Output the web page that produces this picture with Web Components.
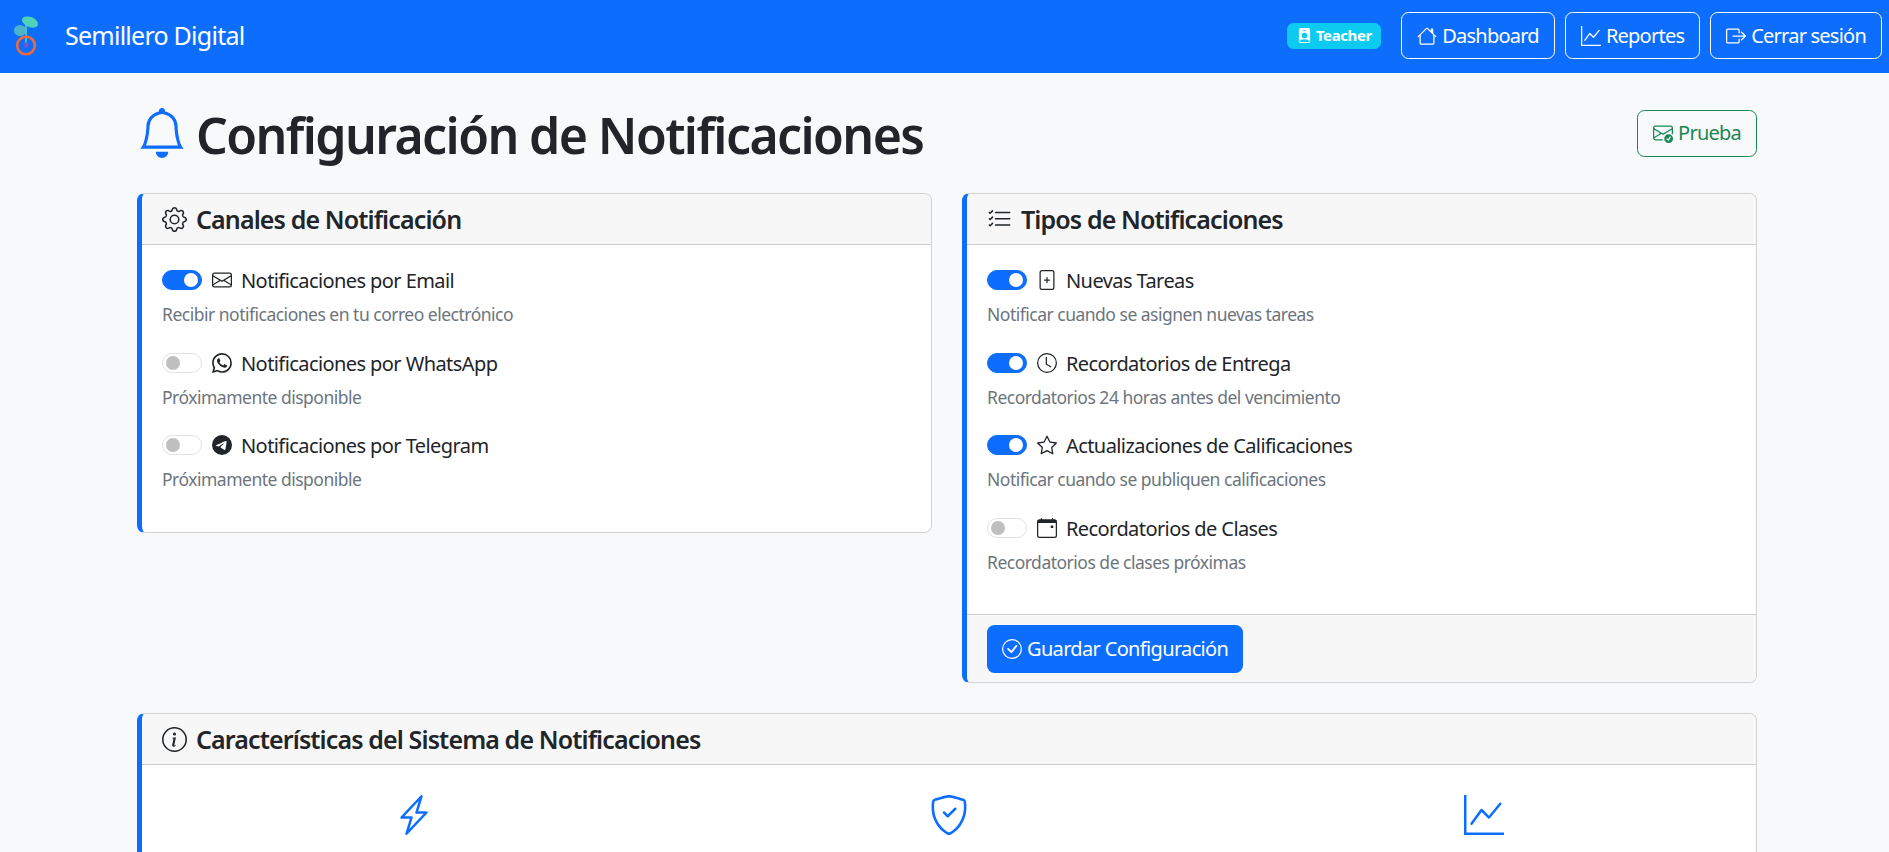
<!DOCTYPE html>
<html lang="es">
<head>
<meta charset="utf-8">
<title>Configuración de Notificaciones</title>
<style>
    html, body { margin: 0; height: 100%; overflow: hidden; }
    body {
        background: #f8f9fa;
        color: #212529;
        font-family: "Noto Sans", "Open Sans", sans-serif;
        font-size: 20px;
        line-height: 1.5;
        letter-spacing: -0.58px;
    }
</style>
</head>
<body>
<app-navbar></app-navbar>
<notif-page></notif-page>

<script>
const ICONS = {
    house: '<path d="M8.707 1.5a1 1 0 0 0-1.414 0L.646 8.146a.5.5 0 0 0 .708.708L2 8.207V13.5A1.5 1.5 0 0 0 3.5 15h9a1.5 1.5 0 0 0 1.5-1.5V8.207l.646.647a.5.5 0 0 0 .708-.708L13 5.793V2.5a.5.5 0 0 0-.5-.5h-1a.5.5 0 0 0-.5.5v1.293zM13 7.207V13.5a.5.5 0 0 1-.5.5h-9a.5.5 0 0 1-.5-.5V7.207l5-5z"/>',
    graph: '<path d="M0 0h1v15h15v1H0zm14.817 3.113a.5.5 0 0 1 .07.704l-4.5 5.5a.5.5 0 0 1-.74.037L7.06 6.767l-3.656 5.027a.5.5 0 0 1-.808-.588l4-5.5a.5.5 0 0 1 .758-.06l2.609 2.61 4.15-5.073a.5.5 0 0 1 .704-.07"/>',
    logout: '<path d="M10 12.5a.5.5 0 0 1-.5.5h-8a.5.5 0 0 1-.5-.5v-9a.5.5 0 0 1 .5-.5h8a.5.5 0 0 1 .5.5v2a.5.5 0 0 0 1 0v-2A1.5 1.5 0 0 0 9.5 2h-8A1.5 1.5 0 0 0 0 3.5v9A1.5 1.5 0 0 0 1.5 14h8a1.5 1.5 0 0 0 1.5-1.5v-2a.5.5 0 0 0-1 0z"/><path d="M15.854 8.354a.5.5 0 0 0 0-.708l-3-3a.5.5 0 0 0-.708.708L14.293 7.5H5.5a.5.5 0 0 0 0 1h8.793l-2.147 2.146a.5.5 0 0 0 .708.708z"/>',
    badge: '<path d="M2 2a2 2 0 0 1 2-2h8a2 2 0 0 1 2 2v12a2 2 0 0 1-2 2H4a2 2 0 0 1-2-2zm4.5 0a.5.5 0 0 0 0 1h3a.5.5 0 0 0 0-1zM8 11a3 3 0 1 0 0-6 3 3 0 0 0 0 6m5 2.755C12.146 12.825 10.623 12 8 12s-4.146.826-5 1.755V14a1 1 0 0 0 1 1h8a1 1 0 0 0 1-1z"/>',
    bell: '<path d="M8 16a2 2 0 0 0 2-2H6a2 2 0 0 0 2 2M8 1.918l-.797.161A4 4 0 0 0 4 6c0 .628-.134 2.197-.459 3.742-.16.767-.376 1.566-.663 2.258h10.244c-.287-.692-.502-1.49-.663-2.258C12.134 8.197 12 6.628 12 6a4 4 0 0 0-3.203-3.92zM14.22 12c.223.447.481.801.78 1H1c.299-.199.557-.553.78-1C2.68 10.2 3 6.88 3 6c0-2.42 1.72-4.44 4.005-4.901a1 1 0 1 1 1.99 0A5 5 0 0 1 13 6c0 .88.32 4.2 1.22 6"/>',
    envcheck: '<path d="M2 2a2 2 0 0 0-2 2v8.01A2 2 0 0 0 2 14h5.5a.5.5 0 0 0 0-1H2a1 1 0 0 1-.966-.741l5.64-3.471L8 9.583l7-4.2V8.5a.5.5 0 0 0 1 0V4a2 2 0 0 0-2-2zm3.708 6.208L1 11.105V5.383zM1 4.217V4a1 1 0 0 1 1-1h12a1 1 0 0 1 1 1v.217l-7 4.2z"/><path d="M16 12.5a3.5 3.5 0 1 1-7 0 3.5 3.5 0 0 1 7 0m-1.993-1.679a.5.5 0 0 0-.686.172l-1.17 1.95-.547-.547a.5.5 0 0 0-.708.708l.774.773a.75.75 0 0 0 1.174-.144l1.335-2.226a.5.5 0 0 0-.172-.686"/>',
    gear: '<path d="M8 4.754a3.246 3.246 0 1 0 0 6.492 3.246 3.246 0 0 0 0-6.492M5.754 8a2.246 2.246 0 1 1 4.492 0 2.246 2.246 0 0 1-4.492 0"/><path d="M9.796 1.343c-.527-1.79-3.065-1.79-3.592 0l-.094.319a.873.873 0 0 1-1.255.52l-.292-.16c-1.64-.892-3.433.902-2.54 2.541l.159.292a.873.873 0 0 1-.52 1.255l-.319.094c-1.79.527-1.79 3.065 0 3.592l.319.094a.873.873 0 0 1 .52 1.255l-.16.292c-.892 1.64.901 3.434 2.541 2.54l.292-.159a.873.873 0 0 1 1.255.52l.094.319c.527 1.79 3.065 1.79 3.592 0l.094-.319a.873.873 0 0 1 1.255-.52l.292.16c1.64.893 3.434-.902 2.54-2.541l-.159-.292a.873.873 0 0 1 .52-1.255l.319-.094c1.79-.527 1.79-3.065 0-3.592l-.319-.094a.873.873 0 0 1-.52-1.255l.16-.292c.893-1.64-.902-3.433-2.541-2.54l-.292.159a.873.873 0 0 1-1.255-.52zm-2.633.283c.246-.835 1.428-.835 1.674 0l.094.319a1.873 1.873 0 0 0 2.693 1.115l.291-.16c.764-.415 1.6.42 1.184 1.185l-.159.292a1.873 1.873 0 0 0 1.116 2.692l.318.094c.835.246.835 1.428 0 1.674l-.319.094a1.873 1.873 0 0 0-1.115 2.693l.16.291c.415.764-.42 1.6-1.185 1.184l-.291-.159a1.873 1.873 0 0 0-2.693 1.116l-.094.318c-.246.835-1.428.835-1.674 0l-.094-.319a1.873 1.873 0 0 0-2.692-1.115l-.292.16c-.764.415-1.6-.42-1.184-1.185l.159-.291A1.873 1.873 0 0 0 1.945 8.93l-.319-.094c-.835-.246-.835-1.428 0-1.674l.319-.094A1.873 1.873 0 0 0 3.06 4.377l-.16-.292c-.415-.764.42-1.6 1.185-1.184l.292.159a1.873 1.873 0 0 0 2.692-1.115z"/>',
    listcheck: '<path fill-rule="evenodd" d="M5 11.5a.5.5 0 0 1 .5-.5h9a.5.5 0 0 1 0 1h-9a.5.5 0 0 1-.5-.5m0-4a.5.5 0 0 1 .5-.5h9a.5.5 0 0 1 0 1h-9a.5.5 0 0 1-.5-.5m0-4a.5.5 0 0 1 .5-.5h9a.5.5 0 0 1 0 1h-9a.5.5 0 0 1-.5-.5M3.854 2.146a.5.5 0 0 1 0 .708l-1.5 1.5a.5.5 0 0 1-.708 0l-.5-.5a.5.5 0 1 1 .708-.708L2 3.293l1.146-1.147a.5.5 0 0 1 .708 0m0 4a.5.5 0 0 1 0 .708l-1.5 1.5a.5.5 0 0 1-.708 0l-.5-.5a.5.5 0 1 1 .708-.708L2 7.293l1.146-1.147a.5.5 0 0 1 .708 0m0 4a.5.5 0 0 1 0 .708l-1.5 1.5a.5.5 0 0 1-.708 0l-.5-.5a.5.5 0 0 1 .708-.708l.146.147 1.146-1.147a.5.5 0 0 1 .708 0"/>',
    envelope: '<path d="M0 4a2 2 0 0 1 2-2h12a2 2 0 0 1 2 2v8a2 2 0 0 1-2 2H2a2 2 0 0 1-2-2zm2-1a1 1 0 0 0-1 1v.217l7 4.2 7-4.2V4a1 1 0 0 0-1-1zm13 2.383-4.708 2.825L15 11.105zm-.034 6.876-5.64-3.471L8 9.583l-1.326-.795-5.64 3.47A1 1 0 0 0 2 13h12a1 1 0 0 0 .966-.741M1 11.105l4.708-2.897L1 5.383z"/>',
    whatsapp: '<path d="M13.601 2.326A7.85 7.85 0 0 0 7.994 0C3.627 0 .068 3.558.064 7.926c0 1.399.366 2.76 1.057 3.965L0 16l4.204-1.102a7.9 7.9 0 0 0 3.79.965h.004c4.368 0 7.926-3.558 7.93-7.93A7.9 7.9 0 0 0 13.6 2.326zM7.994 14.521a6.6 6.6 0 0 1-3.356-.92l-.24-.144-2.494.654.666-2.433-.156-.251a6.56 6.56 0 0 1-1.007-3.505c0-3.626 2.957-6.584 6.591-6.584a6.56 6.56 0 0 1 4.66 1.931 6.56 6.56 0 0 1 1.928 4.66c-.004 3.639-2.961 6.592-6.592 6.592m3.615-4.934c-.197-.099-1.17-.578-1.353-.646-.182-.065-.315-.099-.445.099-.133.197-.513.646-.627.775-.114.133-.232.148-.43.05-.197-.1-.836-.308-1.592-.985-.59-.525-.985-1.175-1.103-1.372-.114-.198-.011-.304.088-.403.087-.088.197-.232.296-.346.1-.114.133-.198.198-.33.065-.134.034-.248-.015-.347-.05-.099-.445-1.076-.612-1.47-.16-.389-.323-.335-.445-.34-.114-.007-.247-.007-.38-.007a.73.73 0 0 0-.529.247c-.182.198-.691.677-.691 1.654s.71 1.916.81 2.049c.098.133 1.394 2.132 3.383 2.992.47.205.84.326 1.129.418.475.152.904.129 1.246.08.38-.058 1.171-.48 1.338-.943.164-.464.164-.86.114-.943-.049-.084-.182-.133-.38-.232"/>',
    telegram: '<path d="M16 8A8 8 0 1 1 0 8a8 8 0 0 1 16 0M8.287 5.906q-1.168.486-4.666 2.01-.567.225-.595.442c-.03.243.275.339.69.47l.175.055c.408.133.958.288 1.243.294q.39.01.868-.32 3.269-2.206 3.374-2.23c.05-.012.12-.026.166.016s.042.12.037.141c-.03.129-1.227 1.241-1.846 1.817-.193.18-.33.307-.358.336a8 8 0 0 1-.188.186c-.38.366-.664.64.015 1.088.327.216.589.393.85.571.284.194.568.387.936.629q.14.092.27.187c.331.236.63.448.997.414.214-.02.435-.22.547-.82.265-1.417.786-4.486.906-5.751a1.4 1.4 0 0 0-.013-.315.34.34 0 0 0-.114-.217.4.4 0 0 0-.24-.073c-.298.005-.96.16-3.6 1.263"/>',
    fileplus: '<path d="M8.5 6a.5.5 0 0 0-1 0v1.5H6a.5.5 0 0 0 0 1h1.5V10a.5.5 0 0 0 1 0V8.5H10a.5.5 0 0 0 0-1H8.5z"/><path d="M2 2a2 2 0 0 1 2-2h8a2 2 0 0 1 2 2v12a2 2 0 0 1-2 2H4a2 2 0 0 1-2-2zm10-1H4a1 1 0 0 0-1 1v12a1 1 0 0 0 1 1h8a1 1 0 0 0 1-1V2a1 1 0 0 0-1-1"/>',
    clock: '<path d="M8 3.5a.5.5 0 0 0-1 0V9a.5.5 0 0 0 .252.434l3.5 2a.5.5 0 0 0 .496-.868L8 8.71z"/><path d="M8 16A8 8 0 1 0 8 0a8 8 0 0 0 0 16m7-8A7 7 0 1 1 1 8a7 7 0 0 1 14 0"/>',
    star: '<path d="M2.866 14.85c-.078.444.36.791.746.593l4.39-2.256 4.389 2.256c.386.198.824-.149.746-.592l-.83-4.73 3.522-3.356c.33-.314.16-.888-.282-.95l-4.898-.696L8.465.792a.513.513 0 0 0-.927 0L5.354 5.12l-4.898.696c-.441.062-.612.636-.283.95l3.523 3.356-.83 4.73zm4.905-2.767-3.686 1.894.694-3.957a.56.56 0 0 0-.163-.505L1.71 6.745l4.052-.576a.53.53 0 0 0 .393-.288L8 2.223l1.847 3.658a.53.53 0 0 0 .393.288l4.052.575-2.906 2.77a.56.56 0 0 0-.163.506l.694 3.957-3.686-1.894a.5.5 0 0 0-.461 0z"/>',
    calendar: '<path d="M11 6.5a.5.5 0 0 1 .5-.5h1a.5.5 0 0 1 .5.5v1a.5.5 0 0 1-.5.5h-1a.5.5 0 0 1-.5-.5z"/><path d="M3.5 0a.5.5 0 0 1 .5.5V1h8V.5a.5.5 0 0 1 1 0V1h1a2 2 0 0 1 2 2v11a2 2 0 0 1-2 2H2a2 2 0 0 1-2-2V3a2 2 0 0 1 2-2h1V.5a.5.5 0 0 1 .5-.5M1 4v10a1 1 0 0 0 1 1h12a1 1 0 0 0 1-1V4z"/>',
    checkcircle: '<path d="M8 15A7 7 0 1 1 8 1a7 7 0 0 1 0 14m0 1A8 8 0 1 0 8 0a8 8 0 0 0 0 16"/><path d="m10.97 4.97-.02.022-3.473 4.425-2.093-2.094a.75.75 0 0 0-1.06 1.06L6.97 11.03a.75.75 0 0 0 1.079-.02l3.992-4.99a.75.75 0 0 0-1.071-1.05"/>',
    info: '<path d="M8 15A7 7 0 1 1 8 1a7 7 0 0 1 0 14m0 1A8 8 0 1 0 8 0a8 8 0 0 0 0 16"/><path d="m8.93 6.588-2.29.287-.082.38.45.083c.294.07.352.176.288.469l-.738 3.468c-.194.897.105 1.319.808 1.319.545 0 1.178-.252 1.465-.598l.088-.416c-.2.176-.492.246-.686.246-.275 0-.375-.193-.304-.533zM9 4.5a1 1 0 1 1-2 0 1 1 0 0 1 2 0"/>',
    lightning: '<path d="M11.251.068a.5.5 0 0 1 .227.58L9.677 6.5H13a.5.5 0 0 1 .364.843l-8 8.5a.5.5 0 0 1-.842-.49L6.323 9.5H3a.5.5 0 0 1-.364-.843l8-8.5a.5.5 0 0 1 .615-.09zM4.157 8.5H7a.5.5 0 0 1 .478.647L6.11 13.59l5.732-6.09H9a.5.5 0 0 1-.478-.647L9.89 2.41z"/>',
    shield: '<path d="M5.338 1.59a61 61 0 0 0-2.837.856.48.48 0 0 0-.328.39c-.554 4.157.726 7.19 2.253 9.188a10.7 10.7 0 0 0 2.287 2.233c.346.244.652.42.893.533q.18.085.293.118a1 1 0 0 0 .101.025 1 1 0 0 0 .1-.025q.114-.034.294-.118c.24-.113.547-.29.893-.533a10.7 10.7 0 0 0 2.287-2.233c1.527-1.997 2.807-5.031 2.253-9.188a.48.48 0 0 0-.328-.39c-.651-.213-1.75-.56-2.837-.855C9.552 1.29 8.531 1.067 8 1.067c-.53 0-1.552.223-2.662.524zM5.072.56C6.157.265 7.31 0 8 0s1.843.265 2.928.56c1.11.3 2.229.655 2.887.87a1.54 1.54 0 0 1 1.044 1.262c.596 4.477-.787 7.795-2.465 9.99a11.8 11.8 0 0 1-2.517 2.453 7 7 0 0 1-1.048.625c-.28.132-.581.24-.829.24s-.548-.108-.829-.24a7 7 0 0 1-1.048-.625 11.8 11.8 0 0 1-2.517-2.453C1.928 10.487.545 7.169 1.141 2.692A1.54 1.54 0 0 1 2.185 1.43 63 63 0 0 1 5.072.56"/><path d="M10.854 5.146a.5.5 0 0 1 0 .708l-3 3a.5.5 0 0 1-.708 0l-1.5-1.5a.5.5 0 1 1 .708-.708L7.5 7.793l2.646-2.647a.5.5 0 0 1 .708 0"/>'
};

class BiIcon extends HTMLElement
{
    constructor(){
        super();
        this.attachShadow({mode:"open"});
    }

    connectedCallback(){
        const size = this.getAttribute("size") || "1em";
        this.shadowRoot.innerHTML = `
        <style>
            :host { display: inline-flex; flex: none; width: ${size}; height: ${size}; }
            svg { display: block; width: 100%; height: 100%; fill: currentColor; }
        </style>
        <svg viewBox="0 0 16 16">${ICONS[this.getAttribute("name")] || ""}</svg>
        `;
    }
}

class NavButton extends HTMLElement
{
    constructor(){
        super();
        this.attachShadow({mode:"open"});
    }

    connectedCallback(){
        this.shadowRoot.innerHTML = `
        <style>
            :host {
                display: inline-flex;
                align-items: center;
                gap: 5px;
                box-sizing: border-box;
                height: 47px;
                padding: 0 15px;
                border: 1px solid currentColor;
                border-radius: 7.5px;
                color: var(--btn-color, #fff);
                letter-spacing: -0.77px;
                white-space: nowrap;
            }
        </style>
        <bi-icon name="${this.getAttribute("icon")}"></bi-icon><slot></slot>
        `;
    }
}

class AppNavbar extends HTMLElement
{
    constructor(){
        super();
        this.attachShadow({mode:"open"});
    }

    connectedCallback(){
        this.shadowRoot.innerHTML = `
        <style>
            :host {
                display: flex;
                align-items: center;
                box-sizing: border-box;
                height: 73px;
                padding: 0 7px 2px 12px;
                background: #0d6efd;
                color: #fff;
            }
            .brand { display: flex; align-items: center; gap: 23px; font-size: 25px; letter-spacing: -0.75px; flex: 1; }
            .logo { display: block; width: 30px; height: 44px; }
            .badge {
                display: inline-flex;
                align-items: center;
                gap: 4px;
                box-sizing: border-box;
                height: 26px;
                margin-right: 20px;
                padding: 0 9.5px;
                border-radius: 6.5px;
                background: #0dcaf0;
                font-size: 15px;
                font-weight: 700;
                letter-spacing: -0.4px;
            }
            .actions { display: flex; align-items: center; gap: 10px; }
        </style>
        <div class="brand">
            <svg class="logo" viewBox="0 0 30 44">
                <ellipse cx="8" cy="16.5" rx="6" ry="5.6" fill="#4cb3cb"/>
                <ellipse cx="18" cy="8" rx="8.4" ry="5" transform="rotate(22 18 8)" fill="#50d2b8"/>
                <path d="M14 9V30" stroke="#58d3b4" stroke-width="1.6" fill="none"/>
                <circle cx="14" cy="31.5" r="8.8" fill="none" stroke="#f0683a" stroke-width="2.6"/>
                <circle cx="14" cy="31" r="2.8" fill="#6a58d8"/>
            </svg>
            <span>Semillero Digital</span>
        </div>
        <span class="badge"><bi-icon name="badge"></bi-icon>Teacher</span>
        <div class="actions">
            <nav-button icon="house">Dashboard</nav-button>
            <nav-button icon="graph">Reportes</nav-button>
            <nav-button icon="logout">Cerrar sesión</nav-button>
        </div>
        `;
    }
}

class NotifToggle extends HTMLElement
{
    constructor(){
        super();
        this.attachShadow({mode:"open"});
    }

    connectedCallback(){
        this.shadowRoot.innerHTML = `
        <style>
            :host {
                display: inline-flex;
                align-items: center;
                flex: none;
                box-sizing: border-box;
                width: 40px;
                height: 20px;
                padding: 0 3px;
                border-radius: 10px;
                border: 1px solid #dee2e6;
                background: #fff;
            }
            :host([on]) {
                justify-content: flex-end;
                background: #0d6efd;
                border-color: #0d6efd;
            }
            .knob { width: 14px; height: 14px; border-radius: 50%; background: #bfbfbf; }
            :host([on]) .knob { background: #fff; }
        </style>
        <span class="knob"></span>
        `;
    }
}

class NotifItem extends HTMLElement
{
    constructor(){
        super();
        this.attachShadow({mode:"open"});
    }

    connectedCallback(){
        const on = this.hasAttribute("on") ? "on" : "";
        this.shadowRoot.innerHTML = `
        <style>
            :host { display: block; height: 62.5px; margin-bottom: 20px; }
            .row { display: flex; align-items: center; height: 30px; }
            bi-icon { margin-left: 10px; margin-right: 9px; }
            .label { padding-top: 2px; }
            .desc { margin-top: 6px; font-size: 17.5px; line-height: 26.25px; color: #6c757d; letter-spacing: -0.5px; }
        </style>
        <div class="row">
            <notif-toggle ${on}></notif-toggle>
            <bi-icon name="${this.getAttribute("icon")}"></bi-icon>
            <span class="label">${this.getAttribute("label")}</span>
        </div>
        <div class="desc"><slot></slot></div>
        `;
    }
}

class NotifCard extends HTMLElement
{
    constructor(){
        super();
        this.attachShadow({mode:"open"});
    }

    connectedCallback(){
        this.shadowRoot.innerHTML = `
        <style>
            :host {
                display: block;
                box-sizing: border-box;
                border: 1px solid rgba(0,0,0,.175);
                border-left: 5px solid #0d6efd;
                border-radius: 7.5px;
                background: #fff;
                overflow: hidden;
            }
            header {
                display: flex;
                align-items: center;
                gap: 9px;
                height: 51px;
                box-sizing: border-box;
                padding: 0 20px;
                border-bottom: 1px solid rgba(0,0,0,.175);
                background: #f7f7f7;
                font-size: 25px;
                font-weight: 600;
                letter-spacing: -0.88px;
            }
            header span { padding-top: 2px; }
            .body { padding: 20px 20px 19px; }
            .foot { display: none; height: 68px; box-sizing: border-box; padding: 10px 20px; border-top: 1px solid rgba(0,0,0,.175); background: #f7f7f7; }
            :host([footer]) .foot { display: block; }
        </style>
        <header><bi-icon name="${this.getAttribute("icon")}"></bi-icon><span>${this.getAttribute("title")}</span></header>
        <div class="body"><slot></slot></div>
        <div class="foot"><slot name="footer"></slot></div>
        `;
    }
}

class FeatureIcons extends HTMLElement
{
    constructor(){
        super();
        this.attachShadow({mode:"open"});
    }

    connectedCallback(){
        this.shadowRoot.innerHTML = `
        <style>
            :host {
                display: grid;
                grid-template-columns: repeat(3, 1fr);
                margin: 0 -16px;
                padding: 10px 0 60px;
                color: #0d6efd;
                justify-items: center;
            }
        </style>
        <bi-icon name="lightning" size="40px"></bi-icon>
        <bi-icon name="shield" size="40px"></bi-icon>
        <bi-icon name="graph" size="40px"></bi-icon>
        `;
    }
}

class NotifPage extends HTMLElement
{
    constructor(){
        super();
        this.attachShadow({mode:"open"});
    }

    connectedCallback(){
        this.shadowRoot.innerHTML = `
        <style>
            :host { display: block; padding: 30px 132px 0 137px; }
            .title-row { display: flex; align-items: center; justify-content: space-between; height: 60px; margin-bottom: 30px; }
            h1 {
                display: flex;
                align-items: center;
                gap: 9px;
                margin: 0;
                font-size: 50px;
                line-height: 60px;
                font-weight: 600;
                letter-spacing: -1.6px;
            }
            h1 bi-icon { color: #0d6efd; }
            h1 span { padding-top: 3px; }
            .test { --btn-color: #198754; }
            .columns { display: grid; grid-template-columns: 1fr 1fr; gap: 30px; align-items: start; margin-bottom: 30px; }
            .save {
                display: inline-flex;
                align-items: center;
                gap: 5px;
                box-sizing: border-box;
                height: 47.5px;
                padding: 0 15px;
                border-radius: 7.5px;
                background: #0d6efd;
                color: #fff;
                letter-spacing: -0.66px;
                vertical-align: top;
            }
        </style>
        <div class="title-row">
            <h1><bi-icon name="bell"></bi-icon><span>Configuración de Notificaciones</span></h1>
            <nav-button class="test" icon="envcheck">Prueba</nav-button>
        </div>
        <div class="columns">
            <notif-card icon="gear" title="Canales de Notificación">
                <notif-item on icon="envelope" label="Notificaciones por Email">Recibir notificaciones en tu correo electrónico</notif-item>
                <notif-item icon="whatsapp" label="Notificaciones por WhatsApp">Próximamente disponible</notif-item>
                <notif-item icon="telegram" label="Notificaciones por Telegram">Próximamente disponible</notif-item>
            </notif-card>
            <notif-card icon="listcheck" title="Tipos de Notificaciones" footer>
                <notif-item on icon="fileplus" label="Nuevas Tareas">Notificar cuando se asignen nuevas tareas</notif-item>
                <notif-item on icon="clock" label="Recordatorios de Entrega">Recordatorios 24 horas antes del vencimiento</notif-item>
                <notif-item on icon="star" label="Actualizaciones de Calificaciones">Notificar cuando se publiquen calificaciones</notif-item>
                <notif-item icon="calendar" label="Recordatorios de Clases">Recordatorios de clases próximas</notif-item>
                <div slot="footer" class="save"><bi-icon name="checkcircle"></bi-icon>Guardar Configuración</div>
            </notif-card>
        </div>
        <notif-card icon="info" title="Características del Sistema de Notificaciones">
            <feature-icons></feature-icons>
        </notif-card>
        `;
    }
}

customElements.define("bi-icon", BiIcon);
customElements.define("nav-button", NavButton);
customElements.define("app-navbar", AppNavbar);
customElements.define("notif-toggle", NotifToggle);
customElements.define("notif-item", NotifItem);
customElements.define("notif-card", NotifCard);
customElements.define("feature-icons", FeatureIcons);
customElements.define("notif-page", NotifPage);
</script>
</body>
</html>
